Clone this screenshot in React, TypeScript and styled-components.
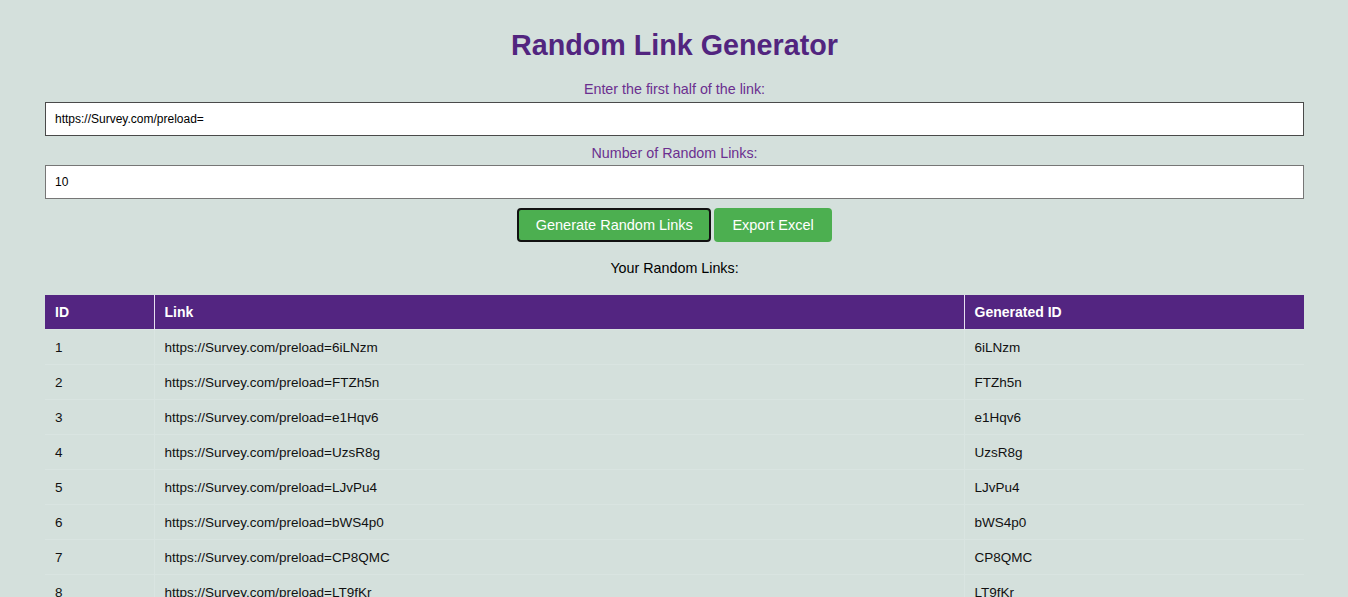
import React from "react";
import styled, { createGlobalStyle } from "styled-components";

const Global = createGlobalStyle`
  html, body { margin: 0; padding: 0; background: #d4e0dc; }
  body { font-family: "Liberation Sans", Arial, sans-serif; }
`;

const Page = styled.div`
  padding: 28px 44px 40px 45px;
  display: flex;
  flex-direction: column;
  align-items: stretch;
`;

const Title = styled.h1`
  margin: 0;
  text-align: center;
  font-size: 28.7px;
  line-height: 34px;
  font-weight: bold;
  color: #52257f;
`;

const Label = styled.label<{ $top: number; $bottom: number }>`
  display: block;
  text-align: center;
  font-size: 14.3px;
  line-height: 16px;
  color: #6b2f8f;
  margin-top: ${(p) => p.$top}px;
  margin-bottom: ${(p) => p.$bottom}px;
`;

const Input = styled.input<{ $dark?: boolean }>`
  box-sizing: border-box;
  width: 100%;
  height: 34px;
  border: 1px solid ${(p) => (p.$dark ? "#4a4a4a" : "#767676")};
  background: #fff;
  padding: 0 9px;
  font-family: "Liberation Sans", Arial, sans-serif;
  font-size: 12px;
  color: #000;
  outline: none;
`;

const ButtonRow = styled.div`
  display: flex;
  justify-content: center;
  gap: 3px;
  margin-top: 9px;
`;

const Button = styled.button<{ $focused?: boolean }>`
  box-sizing: border-box;
  height: 34px;
  padding: 0 ${(p) => (p.$focused ? 16.5 : 18)}px;
  background: #4caf50;
  color: #fff;
  border: ${(p) => (p.$focused ? "2px solid #111" : "none")};
  border-radius: 4px;
  font-family: "Liberation Sans", Arial, sans-serif;
  font-size: 14.5px;
  cursor: pointer;
`;

const SubTitle = styled.div`
  text-align: center;
  font-size: 14.3px;
  line-height: 16px;
  color: #000;
  margin-top: 18px;
`;

const Table = styled.table`
  margin-top: 19px;
  width: 100%;
  table-layout: fixed;
  border-collapse: collapse;
  font-size: 13.5px;
`;

const Th = styled.th`
  background: #532581;
  color: #fff;
  text-align: left;
  font-weight: bold;
  font-size: 14px;
  height: 34px;
  padding: 0 10px;
  border-left: 1px solid #e6dff0;
  &:first-child { border-left: none; }
`;

const Td = styled.td`
  height: 34px;
  padding: 0 10px;
  color: #111;
  border: 1px solid #d9e4e1;
  &:first-child { border-left: none; }
  &:last-child { border-right: none; }
`;

const base = "https://Survey.com/preload=";
const ids = ["6iLNzm", "FTZh5n", "e1Hqv6", "UzsR8g", "LJvPu4", "bWS4p0", "CP8QMC", "LT9fKr", "a7KdQ2", "Xm3pW9"];

export default function App() {
  return (
    <>
      <Global />
      <Page>
        <Title>Random Link Generator</Title>
        <Label $top={19} $bottom={5}>Enter the first half of the link:</Label>
        <Input $dark defaultValue={base} />
        <Label $top={9} $bottom={4}>Number of Random Links:</Label>
        <Input defaultValue="10" />
        <ButtonRow>
          <Button $focused>Generate Random Links</Button>
          <Button>Export Excel</Button>
        </ButtonRow>
        <SubTitle>Your Random Links:</SubTitle>
        <Table>
          <colgroup>
            <col style={{ width: 109 }} />
            <col style={{ width: 810 }} />
            <col />
          </colgroup>
          <thead>
            <tr>
              <Th>ID</Th>
              <Th>Link</Th>
              <Th>Generated ID</Th>
            </tr>
          </thead>
          <tbody>
            {ids.map((id, i) => (
              <tr key={id}>
                <Td>{i + 1}</Td>
                <Td>{base + id}</Td>
                <Td>{id}</Td>
              </tr>
            ))}
          </tbody>
        </Table>
      </Page>
    </>
  );
}
